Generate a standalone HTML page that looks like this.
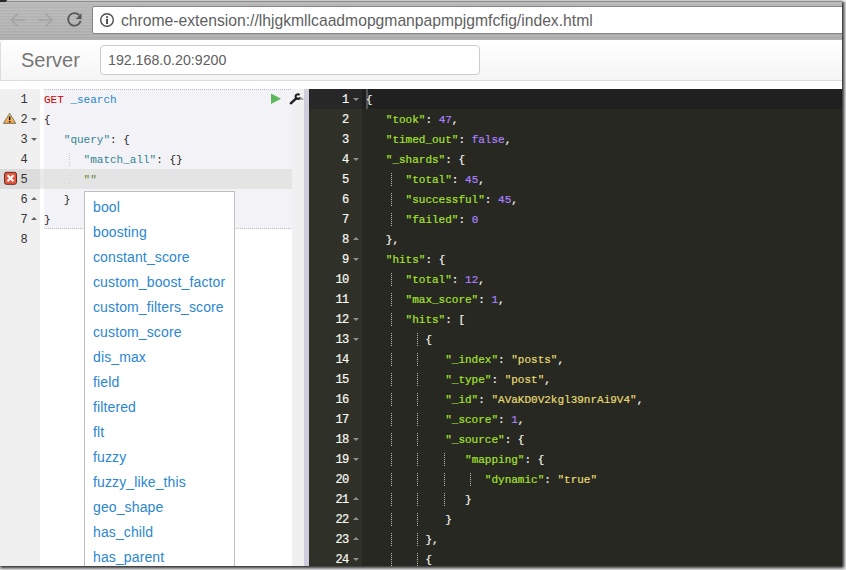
<!DOCTYPE html>
<html><head><meta charset="utf-8">
<style>
*{margin:0;padding:0;box-sizing:border-box}
html,body{width:846px;height:570px;overflow:hidden;background:#fff;font-family:"Liberation Sans",sans-serif}
.a{position:absolute}
#toolbar{left:0;top:0;width:843px;height:40px;background:repeating-linear-gradient(rgba(255,255,255,.05) 0 1px,rgba(0,0,0,.03) 1px 2px,rgba(255,255,255,0) 2px 3px),linear-gradient(#bababa,#b6b6b6 60%,#afafaf)}
#tbtop{left:0;top:0;width:843px;height:2px;background:linear-gradient(#cacaca 0 1px,#8e8e8e 1px 2px)}
#tab{left:0;top:0;width:7px;height:2px;background:#2a2a2a;border-radius:0 0 2px 0}
#omni{left:92px;top:6px;width:760px;height:28px;background:#fff;border:1px solid #858585;border-radius:2px}
#url{left:121px;top:11.5px;font-size:15.7px;color:#5f5f5f;white-space:nowrap}
#navbar{left:0;top:40px;width:850px;height:41px;background:linear-gradient(#fff,#f5f5f5);border:1px solid #ddd;border-top:none;border-radius:4px 0 0 0}
#brand{left:21px;top:49px;font-size:20px;color:#777}
#server{left:100px;top:45px;width:380px;height:30px;border:1px solid #ccc;border-radius:4px;background:#fff}
#servertxt{left:108px;top:52px;font-size:14.2px;color:#606060}
#lgut{left:0;top:89px;width:40px;height:477px;background:#f0f0f0}
#lcontent{left:40px;top:89px;width:264px;height:477px;background:#fff}
#block{left:44px;top:89px;width:248px;height:140px;background:repeating-linear-gradient(90deg,#bcbacb 0 1px,transparent 1px 2px) 0 0/248px 1px no-repeat,repeating-linear-gradient(90deg,#bcbacb 0 1px,transparent 1px 2px) 0 139px/248px 1px no-repeat,#f3f2f6}
#rightstrip{left:292px;top:89px;width:12px;height:477px;background:#f0f0f0}
#actl{left:44px;top:169px;width:248px;height:20px;background:#e4e4e4}
#acts{left:40px;top:169px;width:4px;height:20px;background:#e9e9e9}
#actg{left:0;top:169px;width:40px;height:20px;background:#dcdcdc}
#divider{left:304px;top:89px;width:5px;height:477px;background:#cfccdb}
#out{left:309px;top:89px;width:534px;height:477px;background:#272822}
#ogut{left:309px;top:89px;width:53px;height:477px;background:#2f3129}
#oact{left:309px;top:89px;width:533px;height:20px;background:#202020}
#oactg{left:309px;top:89px;width:53px;height:20px;background:#272727}
#cursor{left:366px;top:89px;width:2px;height:20px;background:#555}
html,body{background:#ececec}
.ln{position:absolute;margin-top:1px;transform:scaleY(1.05);transform-origin:0 14px;font-family:"Liberation Mono",monospace;font-size:11px;line-height:20px;height:20px;white-space:pre}
.gn{position:absolute;margin-top:1px;font-family:"Liberation Mono",monospace;font-size:12px;letter-spacing:-0.6px;line-height:20px;height:20px;text-align:right}
.lgn{left:0;width:27px;color:#333}
.rgn{left:309px;width:39.7px;color:#f8f8f2}
.le .m{color:#cc0000}.le .u{color:#1f87cc}.le .k{color:#318495}.le .p{color:#222}.le .s{color:#62801f}
.re{color:#f8f8f2;-webkit-text-stroke-width:0.2px}.rgn{-webkit-text-stroke-width:0.2px}.re .k{color:#a6e22e}.re .s{color:#e6db74}.re .n{color:#ae81ff}.re .p{color:#f8f8f2}
.g{position:absolute;width:1px;height:13px;background:repeating-linear-gradient(#bbb 0 1px,transparent 1px 2px)}
.gl{margin-top:-1px;height:14px;background:repeating-linear-gradient(rgba(255,255,255,.9) 0 1px,#c4c4c4 1px 2px)}
.fw{position:absolute;width:0;height:0;border-left:3px solid transparent;border-right:3px solid transparent}
.fd{border-top:3.5px solid #666}
.fu{border-bottom:3.5px solid #666}
.rfw.fd{border-top-color:#8f8f8f}.rfw.fu{border-bottom-color:#8f8f8f}
#popup{left:84px;top:191px;width:151px;height:390px;background:#fff;border:1px solid #c0c0c0}
.pi{position:absolute;left:8px;margin-top:1.5px;letter-spacing:0.12px;font-size:14px;line-height:16px;color:#2b87d1;white-space:nowrap}
</style></head><body>
<div id="win" class="a" style="left:0;top:0;width:842px;height:566px;background:#fff;overflow:hidden;box-shadow:1px 1px 3px 1px rgba(0,0,0,.85)">
<div id="toolbar" class="a"></div>
<div id="tbtop" class="a"></div>
<div id="tab" class="a"></div>
<div id="omni" class="a"></div>
<div id="url" class="a">chrome-extension://lhjgkmllcaadmopgmanpapmpjgmfcfig/index.html</div>
<div id="navbar" class="a"></div>
<div id="brand" class="a">Server</div>
<div id="server" class="a"></div>
<div id="servertxt" class="a">192.168.0.20:9200</div>
<div id="lgut" class="a"></div>
<div id="lcontent" class="a"></div>
<div id="block" class="a"></div>
<div id="rightstrip" class="a"></div>
<div id="actl" class="a"></div>
<div id="acts" class="a"></div>
<div id="actg" class="a"></div>
<div id="divider" class="a"></div>
<div id="out" class="a"></div>
<div id="ogut" class="a"></div>
<div id="oact" class="a"></div>
<div id="oactg" class="a"></div>
<div id="cursor" class="a"></div>
<div class="ln le" style="left:44px;top:89px"><span class="m">GET</span><span> </span><span class="u">_search</span></div>
<div class="gn lgn" style="top:89px">1</div>
<div class="ln le" style="left:44px;top:109px"><span class="p">{</span></div>
<div class="gn lgn" style="top:109px">2</div>
<div class="fw fd lfw" style="left:31px;top:118px"></div>
<div class="ln le" style="left:44px;top:129px"><span>   </span><span class="k">&quot;query&quot;</span><span class="p">: </span><span class="p">{</span></div>
<div class="gn lgn" style="top:129px">3</div>
<div class="fw fd lfw" style="left:31px;top:138px"></div>
<div class="g gl" style="left:69px;top:153px"></div>
<div class="ln le" style="left:44px;top:149px"><span>      </span><span class="k">&quot;match_all&quot;</span><span class="p">: </span><span class="p">{}</span></div>
<div class="gn lgn" style="top:149px">4</div>
<div class="g gl" style="left:69px;top:173px"></div>
<div class="ln le" style="left:44px;top:169px"><span>      </span><span class="s">&quot;&quot;</span></div>
<div class="gn lgn" style="top:169px">5</div>
<div class="ln le" style="left:44px;top:189px"><span>   </span><span class="p">}</span></div>
<div class="gn lgn" style="top:189px">6</div>
<div class="fw fu lfw" style="left:31px;top:197px"></div>
<div class="ln le" style="left:44px;top:209px"><span class="p">}</span></div>
<div class="gn lgn" style="top:209px">7</div>
<div class="fw fu lfw" style="left:31px;top:217px"></div>
<div class="ln le" style="left:44px;top:229px"></div>
<div class="gn lgn" style="top:229px">8</div>
<div class="ln re" style="left:366px;top:89px"><span class="p">{</span></div>
<div class="gn rgn" style="top:89px">1</div>
<div class="fw fd rfw" style="left:353px;top:98px"></div>
<div class="ln re" style="left:366px;top:109px"><span>   </span><span class="k">&quot;took&quot;</span><span class="p">:</span><span> </span><span class="n">47</span><span class="p">,</span></div>
<div class="gn rgn" style="top:109px">2</div>
<div class="ln re" style="left:366px;top:129px"><span>   </span><span class="k">&quot;timed_out&quot;</span><span class="p">:</span><span> </span><span class="n">false</span><span class="p">,</span></div>
<div class="gn rgn" style="top:129px">3</div>
<div class="ln re" style="left:366px;top:149px"><span>   </span><span class="k">&quot;_shards&quot;</span><span class="p">:</span><span> </span><span class="p">{</span></div>
<div class="gn rgn" style="top:149px">4</div>
<div class="fw fd rfw" style="left:353px;top:158px"></div>
<div class="g gr" style="left:391px;top:173px"></div>
<div class="ln re" style="left:366px;top:169px"><span>      </span><span class="k">&quot;total&quot;</span><span class="p">:</span><span> </span><span class="n">45</span><span class="p">,</span></div>
<div class="gn rgn" style="top:169px">5</div>
<div class="g gr" style="left:391px;top:193px"></div>
<div class="ln re" style="left:366px;top:189px"><span>      </span><span class="k">&quot;successful&quot;</span><span class="p">:</span><span> </span><span class="n">45</span><span class="p">,</span></div>
<div class="gn rgn" style="top:189px">6</div>
<div class="g gr" style="left:391px;top:213px"></div>
<div class="ln re" style="left:366px;top:209px"><span>      </span><span class="k">&quot;failed&quot;</span><span class="p">:</span><span> </span><span class="n">0</span></div>
<div class="gn rgn" style="top:209px">7</div>
<div class="ln re" style="left:366px;top:229px"><span>   </span><span class="p">}</span><span class="p">,</span></div>
<div class="gn rgn" style="top:229px">8</div>
<div class="fw fu rfw" style="left:353px;top:237px"></div>
<div class="ln re" style="left:366px;top:249px"><span>   </span><span class="k">&quot;hits&quot;</span><span class="p">:</span><span> </span><span class="p">{</span></div>
<div class="gn rgn" style="top:249px">9</div>
<div class="fw fd rfw" style="left:353px;top:258px"></div>
<div class="g gr" style="left:391px;top:273px"></div>
<div class="ln re" style="left:366px;top:269px"><span>      </span><span class="k">&quot;total&quot;</span><span class="p">:</span><span> </span><span class="n">12</span><span class="p">,</span></div>
<div class="gn rgn" style="top:269px">10</div>
<div class="g gr" style="left:391px;top:293px"></div>
<div class="ln re" style="left:366px;top:289px"><span>      </span><span class="k">&quot;max_score&quot;</span><span class="p">:</span><span> </span><span class="n">1</span><span class="p">,</span></div>
<div class="gn rgn" style="top:289px">11</div>
<div class="g gr" style="left:391px;top:313px"></div>
<div class="ln re" style="left:366px;top:309px"><span>      </span><span class="k">&quot;hits&quot;</span><span class="p">:</span><span> </span><span class="p">[</span></div>
<div class="gn rgn" style="top:309px">12</div>
<div class="fw fd rfw" style="left:353px;top:318px"></div>
<div class="g gr" style="left:391px;top:333px"></div><div class="g gr" style="left:417px;top:333px"></div>
<div class="ln re" style="left:366px;top:329px"><span>         </span><span class="p">{</span></div>
<div class="gn rgn" style="top:329px">13</div>
<div class="fw fd rfw" style="left:353px;top:338px"></div>
<div class="g gr" style="left:391px;top:353px"></div><div class="g gr" style="left:417px;top:353px"></div>
<div class="ln re" style="left:366px;top:349px"><span>            </span><span class="k">&quot;_index&quot;</span><span class="p">:</span><span> </span><span class="s">&quot;posts&quot;</span><span class="p">,</span></div>
<div class="gn rgn" style="top:349px">14</div>
<div class="g gr" style="left:391px;top:373px"></div><div class="g gr" style="left:417px;top:373px"></div>
<div class="ln re" style="left:366px;top:369px"><span>            </span><span class="k">&quot;_type&quot;</span><span class="p">:</span><span> </span><span class="s">&quot;post&quot;</span><span class="p">,</span></div>
<div class="gn rgn" style="top:369px">15</div>
<div class="g gr" style="left:391px;top:393px"></div><div class="g gr" style="left:417px;top:393px"></div>
<div class="ln re" style="left:366px;top:389px"><span>            </span><span class="k">&quot;_id&quot;</span><span class="p">:</span><span> </span><span class="s">&quot;AVaKD0V2kgl39nrAi9V4&quot;</span><span class="p">,</span></div>
<div class="gn rgn" style="top:389px">16</div>
<div class="g gr" style="left:391px;top:413px"></div><div class="g gr" style="left:417px;top:413px"></div>
<div class="ln re" style="left:366px;top:409px"><span>            </span><span class="k">&quot;_score&quot;</span><span class="p">:</span><span> </span><span class="n">1</span><span class="p">,</span></div>
<div class="gn rgn" style="top:409px">17</div>
<div class="g gr" style="left:391px;top:433px"></div><div class="g gr" style="left:417px;top:433px"></div>
<div class="ln re" style="left:366px;top:429px"><span>            </span><span class="k">&quot;_source&quot;</span><span class="p">:</span><span> </span><span class="p">{</span></div>
<div class="gn rgn" style="top:429px">18</div>
<div class="fw fd rfw" style="left:353px;top:438px"></div>
<div class="g gr" style="left:391px;top:453px"></div><div class="g gr" style="left:417px;top:453px"></div><div class="g gr" style="left:444px;top:453px"></div>
<div class="ln re" style="left:366px;top:449px"><span>               </span><span class="k">&quot;mapping&quot;</span><span class="p">:</span><span> </span><span class="p">{</span></div>
<div class="gn rgn" style="top:449px">19</div>
<div class="fw fd rfw" style="left:353px;top:458px"></div>
<div class="g gr" style="left:391px;top:473px"></div><div class="g gr" style="left:417px;top:473px"></div><div class="g gr" style="left:444px;top:473px"></div><div class="g gr" style="left:470px;top:473px"></div>
<div class="ln re" style="left:366px;top:469px"><span>                  </span><span class="k">&quot;dynamic&quot;</span><span class="p">:</span><span> </span><span class="s">&quot;true&quot;</span></div>
<div class="gn rgn" style="top:469px">20</div>
<div class="g gr" style="left:391px;top:493px"></div><div class="g gr" style="left:417px;top:493px"></div><div class="g gr" style="left:444px;top:493px"></div>
<div class="ln re" style="left:366px;top:489px"><span>               </span><span class="p">}</span></div>
<div class="gn rgn" style="top:489px">21</div>
<div class="fw fu rfw" style="left:353px;top:497px"></div>
<div class="g gr" style="left:391px;top:513px"></div><div class="g gr" style="left:417px;top:513px"></div>
<div class="ln re" style="left:366px;top:509px"><span>            </span><span class="p">}</span></div>
<div class="gn rgn" style="top:509px">22</div>
<div class="fw fu rfw" style="left:353px;top:517px"></div>
<div class="g gr" style="left:391px;top:533px"></div><div class="g gr" style="left:417px;top:533px"></div>
<div class="ln re" style="left:366px;top:529px"><span>         </span><span class="p">}</span><span class="p">,</span></div>
<div class="gn rgn" style="top:529px">23</div>
<div class="fw fu rfw" style="left:353px;top:537px"></div>
<div class="g gr" style="left:391px;top:553px"></div><div class="g gr" style="left:417px;top:553px"></div>
<div class="ln re" style="left:366px;top:549px"><span>         </span><span class="p">{</span></div>
<div class="gn rgn" style="top:549px">24</div>
<div class="fw fd rfw" style="left:353px;top:558px"></div>
<div id="popup" class="a"><div class="pi" style="top:5px">bool</div><div class="pi" style="top:30px">boosting</div><div class="pi" style="top:55px">constant_score</div><div class="pi" style="top:80px">custom_boost_factor</div><div class="pi" style="top:105px">custom_filters_score</div><div class="pi" style="top:130px">custom_score</div><div class="pi" style="top:155px">dis_max</div><div class="pi" style="top:180px">field</div><div class="pi" style="top:205px">filtered</div><div class="pi" style="top:230px">flt</div><div class="pi" style="top:255px">fuzzy</div><div class="pi" style="top:280px">fuzzy_like_this</div><div class="pi" style="top:305px">geo_shape</div><div class="pi" style="top:330px">has_child</div><div class="pi" style="top:355px">has_parent</div></div>
<svg class="a" style="left:0;top:0" width="846" height="40">
<path d="M18 13.5 L11.5 20 L18 26.5 M11.5 20 H25" fill="none" stroke="#a3a3a3" stroke-width="1.7"/>
<path d="M45.5 13.5 L52 20 L45.5 26.5 M52 20 H38.5" fill="none" stroke="#a3a3a3" stroke-width="1.7"/>
<path d="M79.2 15.2 A6.3 6.3 0 1 0 80.6 20.8" fill="none" stroke="#555" stroke-width="1.8"/>
<path d="M81.5 13.2 V19 H75.7 Z" fill="#555"/>
<circle cx="107" cy="20" r="6.3" fill="none" stroke="#4e4e4e" stroke-width="1.4"/>
<rect x="106.2" y="16.2" width="1.7" height="1.7" fill="#333"/>
<rect x="106.2" y="18.8" width="1.7" height="5.2" fill="#333"/>
</svg>
<svg class="a" style="left:0;top:88px" width="320" height="110">
<path d="M271 93.5 L281 98.7 L271 104 Z" fill="#5cb85c" transform="translate(0,-88)"/>
<g transform="translate(0,-88)">
<path d="M290.8 103.3 L296.2 98.3" stroke="#1e1e1e" stroke-width="2.4" stroke-linecap="round"/>
<path d="M299.53 94.97 A2.3 2.3 0 1 0 300.06 97.39" fill="none" stroke="#1e1e1e" stroke-width="2.1"/>
<path d="M299.6 99.8 H304 L301.6 96.9 Z" fill="#999"/>
<defs><linearGradient id="wg" x1="0" y1="0" x2="0" y2="1"><stop offset="0" stop-color="#ffe070"/><stop offset="1" stop-color="#f59a3a"/></linearGradient></defs>
<path d="M9.6 113.2 L15.8 123.4 H3.4 Z" fill="url(#wg)" stroke="#707070" stroke-width="0.9" stroke-linejoin="round"/>
<rect x="8.9" y="116.3" width="1.5" height="3.8" fill="#111"/>
<rect x="8.9" y="121" width="1.5" height="1.4" fill="#111"/>
<rect x="4.5" y="172.3" width="12" height="12" rx="2" fill="#e8553c" stroke="#5a2c22" stroke-width="1"/>
<path d="M7.5 175.3 L13.5 181.3 M13.5 175.3 L7.5 181.3" stroke="#fff" stroke-width="2"/>
</g>
</svg>
</div>
<div class="a" style="left:842px;top:0;width:4px;height:3px;background:linear-gradient(#f4f4f4,rgba(236,236,236,0))"></div>
</body></html>
